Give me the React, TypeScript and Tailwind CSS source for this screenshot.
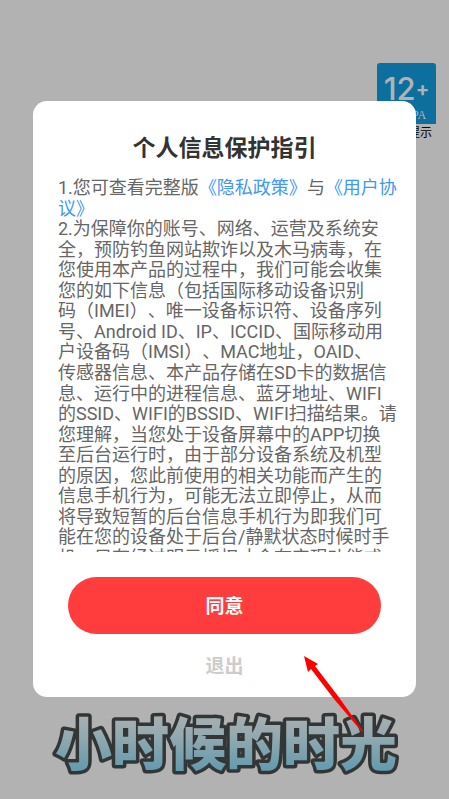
const policyLines = [
  '2.为保障你的账号、网络、运营及系统安',
  '全，预防钓鱼网站欺诈以及木马病毒，在',
  '您使用本产品的过程中，我们可能会收集',
  '您的如下信息（包括国际移动设备识别',
  '码（IMEI）、唯一设备标识符、设备序列',
  '号、Android ID、IP、ICCID、国际移动用',
  '户设备码（IMSI）、MAC地址，OAID、',
  '传感器信息、本产品存储在SD卡的数据信',
  '息、运行中的进程信息、蓝牙地址、WIFI',
  '的SSID、WIFI的BSSID、WIFI扫描结果。请',
  '您理解，当您处于设备屏幕中的APP切换',
  '至后台运行时，由于部分设备系统及机型',
  '的原因，您此前使用的相关功能而产生的',
  '信息手机行为，可能无法立即停止，从而',
  '将导致短暂的后台信息手机行为即我们可',
  '能在您的设备处于后台/静默状态时候时手',
  '机，只有经过明示授权才会在实现功能或',
];

function AgeBadge() {
  return (
    <div className="absolute top-[63px] right-[13px] flex w-[59px] flex-col items-end">
      <div className="flex h-[61px] w-full flex-col items-center justify-between rounded-t-[3px] bg-[#0d6f9e] pt-[10px] text-[#b2b2b2]">
        <span className="flex items-center font-[Inter,sans-serif] text-[31px] leading-8 font-medium">
          12<span className="text-[20px] font-bold">+</span>
        </span>
        <span className="font-['Liberation_Serif',serif] text-[12px] leading-[18px]">CADPA</span>
      </div>
      <span className="pr-1 text-[12px] leading-[18px] whitespace-nowrap text-black">适龄提示</span>
    </div>
  );
}

function PrivacyDialog() {
  return (
    <section
      role="dialog"
      aria-labelledby="dialog-title"
      className="relative z-10 flex flex-col rounded-[14px] bg-white pt-[33px] pb-3"
    >
      <h1 id="dialog-title" className="text-center text-[23px] leading-[30px] font-bold text-[#333]">
        个人信息保护指引
      </h1>
      <div className="mt-[13px] h-[375px] overflow-hidden pl-[25px] text-[18px] leading-[21px] whitespace-nowrap text-[#666] [text-spacing-trim:space-all]">
        <p>
          1.您可查看完整版
          <a href="#privacy" className="text-[#4298f5]">《隐私政策》</a>与
          <a href="#agreement" className="text-[#4298f5]">
            《用户协
            <br />
            议》
          </a>
        </p>
        <p className="flex h-[349px] flex-col justify-between leading-5">
          {policyLines.map((line) => (
            <span key={line}>{line}</span>
          ))}
        </p>
      </div>
      <button
        type="button"
        className="mx-[35px] mt-[25px] h-[57px] rounded-full bg-[#ff3d3d] pt-1 text-[19px] font-bold text-white"
      >
        同意
      </button>
      <button type="button" className="mt-[15px] h-9 self-center px-8 text-[19px] font-bold text-[#ccc]">
        退出
      </button>
    </section>
  );
}

function Caption() {
  return (
    <svg viewBox="0 0 383 90" className="w-full" aria-label="小时候的时光">
      <defs>
        <linearGradient id="captionFill" gradientUnits="userSpaceOnUse" x1="0" y1="18" x2="0" y2="72">
          <stop offset="0" stopColor="#a8b0b2" />
          <stop offset="0.4" stopColor="#93a9b0" />
          <stop offset="1" stopColor="#659bae" />
        </linearGradient>
      </defs>
      <text
        x="193"
        y="68"
        textAnchor="middle"
        fontSize="57"
        fontWeight="900"
        fill="url(#captionFill)"
        stroke="#333636"
        strokeWidth="7"
        strokeLinejoin="round"
        paintOrder="stroke"
      >
        小时候的时光
      </text>
    </svg>
  );
}

export default function App() {
  return (
    <main className="relative min-h-screen overflow-hidden bg-[#b2b2b2] px-[33px] pt-[101px] font-[Roboto,'Noto_Sans_CJK_SC',sans-serif]">
      <AgeBadge />
      <PrivacyDialog />
      <Caption />
      <svg viewBox="0 0 60 78" className="absolute top-[655px] left-[303px] z-20 w-[60px]" aria-hidden="true">
        <path d="M1 1 L15 9 L12 11 L35 41 L60 76 L59 77 L31 44 L8 14 L5 17 Z" fill="#ff0000" />
      </svg>
    </main>
  );
}
